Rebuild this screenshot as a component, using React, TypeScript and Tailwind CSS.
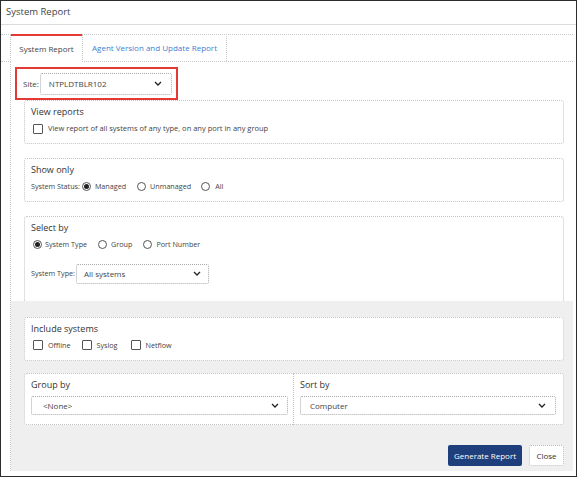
import React from 'react';

const Chevron = () => (
    <svg width="8" height="5" viewBox="0 0 8 5" fill="none">
        <path d="M1 1l3 3 3-3" stroke="#222" strokeWidth="1.3" />
    </svg>
);

const Radio = ({ checked = false }: { checked?: boolean }) => (
    <span className="w-[9px] h-[9px] rounded-full border border-[#555] bg-white flex items-center justify-center shrink-0">
        {checked && <span className="w-[5px] h-[5px] rounded-full bg-[#222]" />}
    </span>
);

const Check = () => <span className="w-[10px] h-[10px] border border-[#555] rounded-[1px] bg-white shrink-0" />;

const Select = ({ value, className }: { value: string; className: string }) => (
    <div className={`flex items-center justify-between border border-dotted border-[#aaa] rounded-[2px] bg-white text-[8px] text-[#444] ${className}`}>
        <span>{value}</span>
        <Chevron />
    </div>
);

const Group = ({ title, className, children }: { title: string; className?: string; children?: React.ReactNode }) => (
    <div className={`border border-dotted border-[#c4c4c4] rounded-[3px] bg-white px-[6px] ${className ?? ''}`}>
        <div className="text-[9px] text-[#333] mt-[5px] mb-[5px] leading-[12px]">{title}</div>
        {children}
    </div>
);

export default function App() {
    return (
        <div
            className="w-[577px] h-[477px] border border-[#2d2d2d] bg-white flex flex-col text-[#444]"
            style={{ fontFamily: '"Open Sans", "Noto Sans", sans-serif' }}
        >
            {/* Title */}
            <div className="h-[24px] border-b border-[#dcdcdc] px-[5px] flex items-center text-[9.5px] text-[#444]">
                System Report
            </div>

            {/* Tabs */}
            <div className="mt-[9px] mr-[3px] h-[28px] border-t border-b border-dotted border-[#c8c8c8] flex items-end pl-[9px]">
                <div className="h-[28px] -mt-px -mb-px w-[73px] border-x border-dotted border-[#c8c8c8] bg-white flex flex-col">
                    <div className="h-[2px] bg-[#e53935]" />
                    <div className="flex-1 flex items-center justify-center text-[8px] text-[#444]">System Report</div>
                </div>
                <div className="h-[27px] w-[144px] border-r border-dotted border-[#c8c8c8] flex items-center justify-center text-[8px] text-[#3d7fd1]">
                    Agent Version and Update Report
                </div>
            </div>

            {/* Content */}
            <div className="flex-1 ml-[9px] mr-[3px] mb-[5px] flex flex-col border-l border-dotted border-[#c8c8c8]">
                <div className="flex flex-col pl-[13px] pr-[9px]">
                    <div className="-ml-[9px] mt-[5px] w-[163px] h-[33px] border-2 border-[#e53935] flex items-center pl-[6px] gap-[1px]">
                        <span className="text-[8px] text-[#444]">Site:</span>
                        <Select value="NTPLDTBLR102" className="w-[132px] h-[22px] pl-[8px] pr-[9px]" />
                    </div>

                    <Group title="View reports" className="h-[44px]">
                        <div className="flex items-center gap-[5px] text-[7.5px] ml-[2px]">
                            <Check />
                            <span>View report of all systems of any type, on any port in any group</span>
                        </div>
                    </Group>

                    <Group title="Show only" className="h-[44px] mt-[14px]">
                        <div className="flex items-center text-[7.2px]">
                            <span className="mr-[2px]">System Status:</span>
                            <Radio checked />
                            <span className="ml-[4px] mr-[11px]">Managed</span>
                            <Radio />
                            <span className="ml-[4px] mr-[10px]">Unmanaged</span>
                            <Radio />
                            <span className="ml-[5px]">All</span>
                        </div>
                    </Group>

                    <Group title="Select by" className="h-[85px] mt-[14px] rounded-b-none border-b-0">
                        <div className="flex items-center text-[7.2px] ml-[2px]">
                            <Radio checked />
                            <span className="ml-[3px] mr-[11px]">System Type</span>
                            <Radio />
                            <span className="ml-[4px] mr-[11px]">Group</span>
                            <Radio />
                            <span className="ml-[4px]">Port Number</span>
                        </div>
                        <div className="flex items-center mt-[14px] text-[7.2px]">
                            <span className="mr-[1px]">System Type:</span>
                            <Select value="All systems" className="w-[133px] h-[20px] pl-[7px] pr-[7px]" />
                        </div>
                    </Group>
                </div>

                {/* Lower options */}
                <div className="flex-1 bg-[#efefef] pl-[13px] pr-[9px] pt-[16px] flex flex-col">
                    <Group title="Include systems" className="h-[44px]">
                        <div className="flex items-center text-[7.2px] ml-[2px]">
                            <Check />
                            <span className="ml-[5px] mr-[11px]">Offline</span>
                            <Check />
                            <span className="ml-[5px] mr-[13px]">Syslog</span>
                            <Check />
                            <span className="ml-[5px]">Netflow</span>
                        </div>
                    </Group>

                    <div className="flex mt-[12px] h-[52px]">
                        <Group title="Group by" className="w-[270px] rounded-r-none">
                            <Select value="<None>" className="w-[257px] h-[19px] pl-[11px] pr-[8px] mt-[4px]" />
                        </Group>
                        <Group title="Sort by" className="flex-1 rounded-l-none border-l-0">
                            <Select value="Computer" className="w-[256px] h-[19px] pl-[9px] pr-[9px] mt-[4px]" />
                        </Group>
                    </div>

                    <div className="flex justify-end items-center gap-[7px] mt-[20px]">
                        <button className="h-[21px] w-[74px] bg-[#1e3f7c] text-white text-[8px] rounded-[2px]">Generate Report</button>
                        <button className="h-[21px] w-[35px] bg-white border border-dotted border-[#bbb] text-[8px] text-[#333] rounded-[2px]">Close</button>
                    </div>
                </div>
            </div>
        </div>
    );
}
